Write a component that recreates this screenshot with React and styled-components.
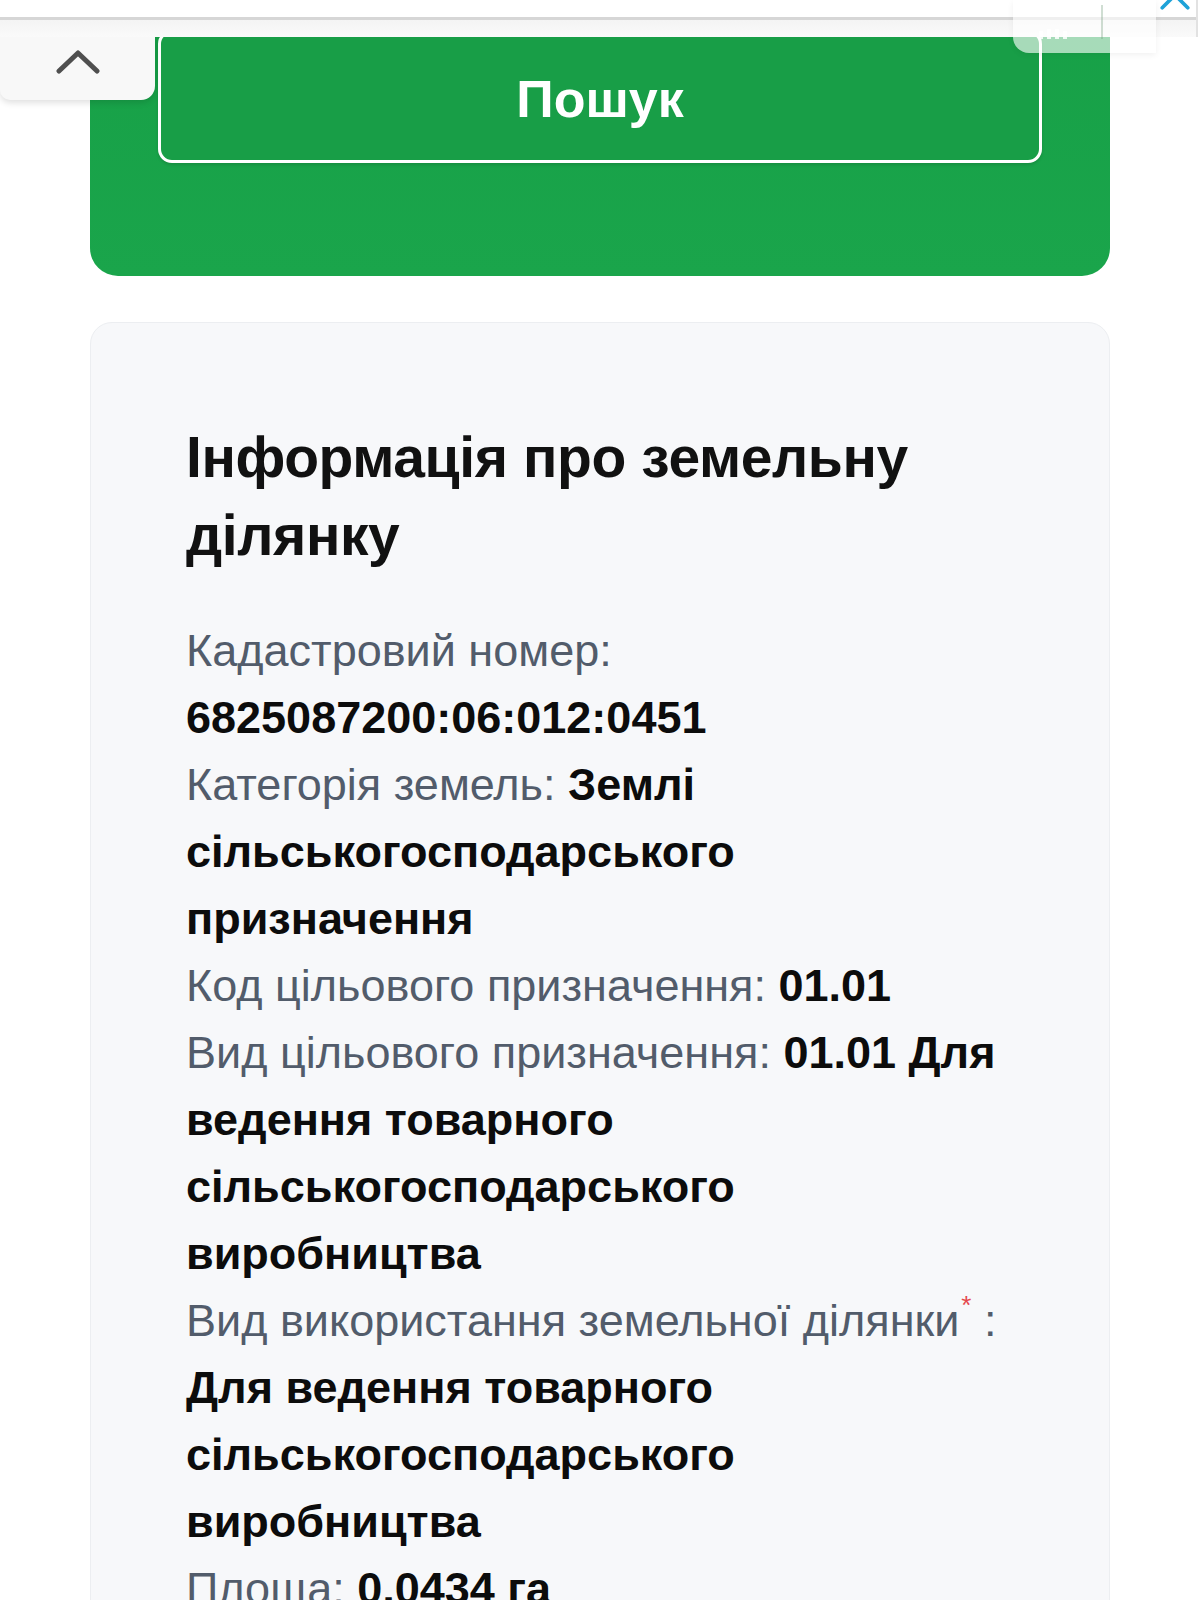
import React from 'react'
import styled, { createGlobalStyle } from 'styled-components'

const GlobalStyle = createGlobalStyle`
  html, body {
    margin: 0;
    padding: 0;
    background: #ffffff;
  }
  body {
    font-family: 'Liberation Sans', Arial, 'Noto Sans', sans-serif;
    -webkit-font-smoothing: antialiased;
  }
`

const Page = styled.div`
  position: relative;
  width: 1200px;
  height: 1600px;
  overflow: hidden;
  background: #ffffff;
`

const TopBar = styled.div`
  position: absolute;
  top: 0;
  left: 0;
  width: 1196px;
  height: 37px;
  background: linear-gradient(180deg, #ffffff 0, #ffffff 17px, #d6d6d6 17px, #d6d6d6 20px, #f4f4f4 20px, #fafafa 37px);
  border-right: 2px solid #e2e2e2;
  z-index: 5;
`

const CloseIcon = styled.svg`
  position: absolute;
  right: 4px;
  top: -22px;
  width: 34px;
  height: 34px;
`

const Widget = styled.div`
  position: absolute;
  top: 0;
  left: 1013px;
  width: 143px;
  height: 53px;
  background: rgba(255, 255, 255, 0.62);
  border-bottom-left-radius: 16px;
  box-shadow: 0 2px 6px rgba(0, 0, 0, 0.06);
  display: flex;
  align-items: flex-end;
  padding: 0 0 14px 26px;
  box-sizing: border-box;
  gap: 4px;
  z-index: 6;
`

const Bar = styled.span`
  display: block;
  width: 4px;
  height: ${p => p.h}px;
  background: rgba(255, 255, 255, 0.85);
`

const Divider = styled.span`
  display: block;
  width: 2px;
  height: 34px;
  margin-left: 30px;
  background: rgba(120, 160, 130, 0.35);
`

const CollapseTab = styled.div`
  position: absolute;
  top: 20px;
  left: 0;
  width: 155px;
  height: 80px;
  background: #f8f8f8;
  border-bottom-right-radius: 14px;
  border-bottom-left-radius: 10px;
  box-shadow: 0 3px 6px rgba(0, 0, 0, 0.12);
  display: flex;
  align-items: center;
  justify-content: center;
  z-index: 4;
`

const Chevron = styled.svg`
  width: 44px;
  height: 26px;
  margin-top: 4px;
`

const Content = styled.div`
  padding: 0 90px;
`

const SearchPanel = styled.div`
  background: linear-gradient(180deg, #17a047 0%, #1aa54b 100%);
  border-radius: 0 0 28px 28px;
  padding: 30px 68px 113px;
`

const SearchButton = styled.button`
  display: flex;
  align-items: center;
  justify-content: center;
  width: 100%;
  height: 133px;
  padding: 0;
  padding-top: 4px;
  background: #189e47;
  border: 3px solid #ffffff;
  border-radius: 14px;
  color: #ffffff;
  font-family: 'Liberation Sans', Arial, sans-serif;
  font-weight: 700;
  font-size: 52px;
  box-shadow: 0 2px 3px rgba(0, 0, 0, 0.12);
  cursor: pointer;
`

const InfoCard = styled.section`
  margin-top: 46px;
  background: #f7f8fa;
  border: 1px solid #eceef1;
  border-radius: 22px;
  padding: 95px 95px 40px;
  min-height: 1400px;
`

const Title = styled.h2`
  margin: 0 0 43px;
  font-size: 57px;
  line-height: 78px;
  font-weight: 700;
  color: #111111;
  letter-spacing: -0.4px;
`

const Field = styled.div`
  font-size: 45px;
  line-height: 67px;
  color: #525c6b;
`

const Value = styled.span`
  font-weight: 700;
  color: #0c0c0c;
`

const LabelEnd = styled.span`
  white-space: nowrap;
`

const Required = styled.sup`
  color: #e5484d;
  font-size: 26px;
  line-height: 0;
  vertical-align: 22px;
  margin-left: 2px;
`

const fields = [
  { label: 'Кадастровий номер:', value: '6825087200:06:012:0451' },
  { label: 'Категорія земель:', value: 'Землі сільськогосподарського призначення' },
  { label: 'Код цільового призначення:', value: '01.01' },
  { label: 'Вид цільового призначення:', value: '01.01 Для ведення товарного сільськогосподарського виробництва' },
  { label: 'Вид використання земельної', last: 'ділянки', required: true, value: 'Для ведення товарного сільськогосподарського виробництва' },
  { label: 'Площа:', value: '0,0434 га' },
]

export default function App() {
  return (
    <Page>
      <GlobalStyle />
      <TopBar>
        <CloseIcon viewBox="0 0 24 24" fill="none" stroke="#1ea2d8" strokeWidth="2.6" strokeLinecap="round">
          <path d="M3 3l18 18M21 3L3 21" />
        </CloseIcon>
      </TopBar>
      <Widget>
        <Bar h={8} />
        <Bar h={10} />
        <Bar h={10} />
        <Bar h={8} />
        <Divider />
      </Widget>
      <CollapseTab>
        <Chevron viewBox="0 0 44 26" fill="none" stroke="#4f4f4f" strokeWidth="5" strokeLinecap="round" strokeLinejoin="round">
          <path d="M3 22L22 4l19 18" />
        </Chevron>
      </CollapseTab>
      <Content>
        <SearchPanel>
          <SearchButton>Пошук</SearchButton>
        </SearchPanel>
        <InfoCard>
          <Title>Інформація про земельну ділянку</Title>
          {fields.map(f => (
            <Field key={f.label}>
              {f.label}
              {f.last && (
                <>
                  {' '}
                  <LabelEnd>
                    {f.last}
                    <Required>*</Required> :
                  </LabelEnd>
                </>
              )}{' '}
              <Value>{f.value}</Value>
            </Field>
          ))}
        </InfoCard>
      </Content>
    </Page>
  )
}
